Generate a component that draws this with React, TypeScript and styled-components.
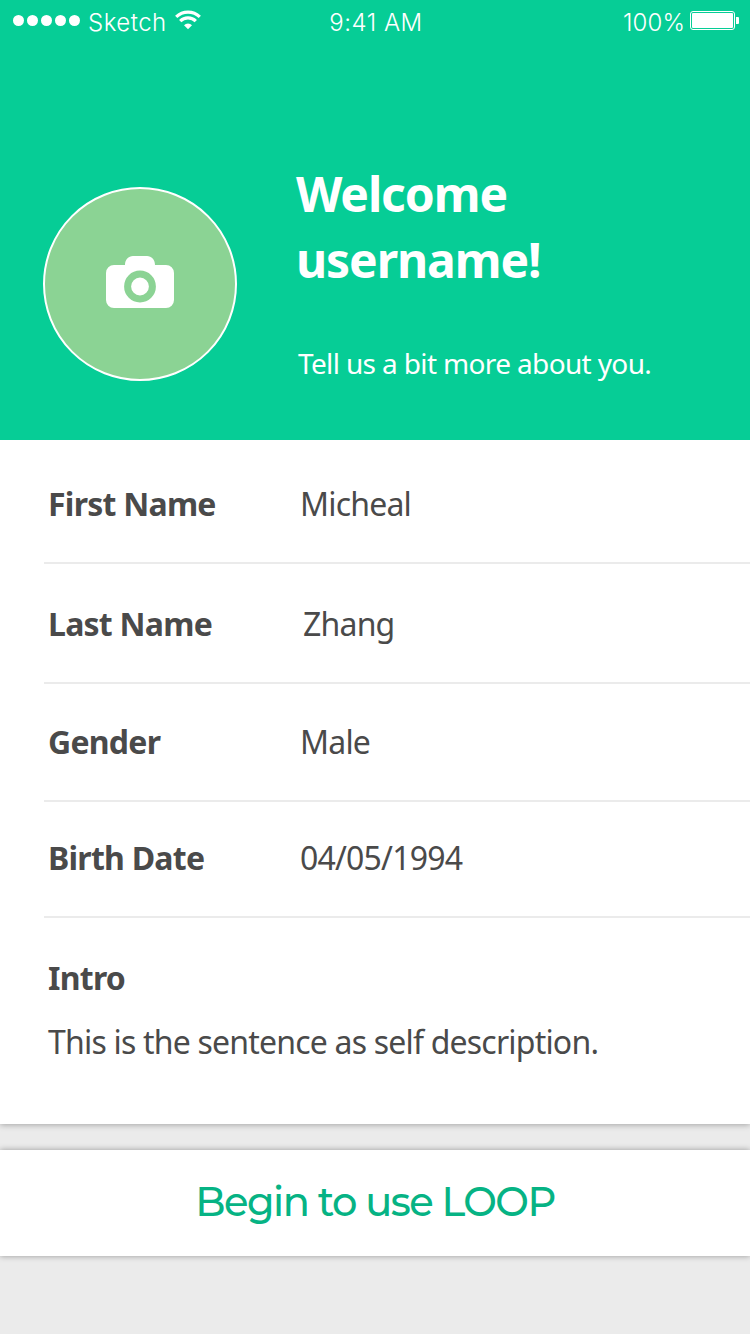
import React from 'react';
import styled, { createGlobalStyle } from 'styled-components';

const GlobalStyle = createGlobalStyle`
  * { box-sizing: border-box; }
  body { margin: 0; background: #ebebeb; }
`;

const Screen = styled.div`
  width: 750px;
  height: 1334px;
  overflow: hidden;
  display: flex;
  flex-direction: column;
  background: #ebebeb;
  color: #4a4a4a;
  font-family: 'Noto Sans', sans-serif;
`;

const Header = styled.header`
  position: relative;
  z-index: 1;
  height: 440px;
  flex: none;
  background: #06cd96;
  color: #fff;
`;

const StatusBar = styled.div`
  height: 40px;
  display: grid;
  grid-template-columns: 1fr auto 1fr;
  padding: 0 11px 0 13px;
  font-family: Inter, sans-serif;
  font-weight: 300;
  font-size: 24px;
  line-height: 46px;
`;

const StatusGroup = styled.div<{ $end?: boolean }>`
  display: flex;
  height: 40px;
  justify-content: ${({ $end }) => ($end ? 'flex-end' : 'flex-start')};
  svg { display: block; flex: none; }
`;

const StatusText = styled.span<{ $spacing: number }>`
  letter-spacing: ${({ $spacing }) => $spacing}px;
  white-space: nowrap;
`;

const SignalIcon = styled.svg`
  margin: 14px 8px 0 0;
`;

const WifiIcon = styled.svg`
  margin: 10px 0 0 8px;
`;

const BatteryIcon = styled.svg`
  margin: 11px 0 0 5px;
`;

const Hero = styled.div`
  display: flex;
  padding: 120px 0 0 43px;
`;

const Avatar = styled.button`
  width: 194px;
  height: 194px;
  flex: none;
  margin: 27px 59px 0 0;
  padding: 2px 0 0;
  border: 2px solid #fff;
  border-radius: 50%;
  background: #8bd394;
  display: flex;
  align-items: center;
  justify-content: center;
  svg { display: block; margin-top: -6px; }
`;

const Title = styled.h1`
  margin: 1px 0 0;
  font-size: 48px;
  line-height: 66px;
  font-weight: 700;
  letter-spacing: -1.1px;
`;

const Subtitle = styled.p`
  margin: 51px 0 0 2px;
  font-size: 28px;
  line-height: 38px;
  letter-spacing: -0.64px;
  white-space: nowrap;
`;

const Card = styled.section`
  height: 684px;
  flex: none;
  padding-left: 44px;
  background: #fff;
  box-shadow: 0 1px 6px rgba(0, 0, 0, 0.3);
`;

const Row = styled.div<{ $height: number; $top: number }>`
  height: ${({ $height }) => $height}px;
  padding: ${({ $top }) => $top}px 0 0 4px;
  border-bottom: 2px solid #ebebeb;
  display: grid;
  grid-template-columns: 252px 1fr;
`;

const Label = styled.div`
  font-size: 32px;
  line-height: 43px;
  font-weight: 700;
  letter-spacing: -0.75px;
  white-space: nowrap;
`;

const Value = styled.div<{ $indent?: number }>`
  padding-left: ${({ $indent = 0 }) => $indent}px;
  font-size: 32px;
  line-height: 43px;
  letter-spacing: -0.8px;
  white-space: nowrap;
`;

const Intro = styled.div`
  padding: 38px 0 0 4px;
  display: grid;
  gap: 21px;
`;

const BeginButton = styled.button`
  width: 750px;
  height: 106px;
  flex: none;
  margin: 26px 0 0;
  padding: 0 0 2px;
  border: 0;
  background: #fff;
  box-shadow: 0 0 6px rgba(0, 0, 0, 0.36);
  color: #06b384;
  font-family: Montserrat, Inter, sans-serif;
  font-weight: 500;
  font-size: 40px;
  line-height: 104px;
  letter-spacing: -1.5px;
`;

const fields = [
  { label: 'First Name', value: 'Micheal', height: 124, top: 42, indent: 0 },
  { label: 'Last Name', value: 'Zhang', height: 120, top: 38, indent: 3 },
  { label: 'Gender', value: 'Male', height: 118, top: 36, indent: 0 },
  { label: 'Birth Date', value: '04/05/1994', height: 116, top: 34, indent: 0 },
];

export default function App() {
  return (
    <Screen>
      <GlobalStyle />
      <Header>
        <StatusBar>
          <StatusGroup>
            <SignalIcon width="67" height="13" viewBox="0 0 67 13" fill="#fff">
              {[5.5, 19.5, 33.5, 47.5, 61.5].map((x) => (
                <circle key={x} cx={x} cy="6.5" r="5.5" />
              ))}
            </SignalIcon>
            <StatusText $spacing={0.5}>Sketch</StatusText>
            <WifiIcon width="26" height="20" viewBox="0 0 26 20" fill="none" stroke="#fff" strokeWidth="3.2">
              <path d="M1.2 6.8 A17 17 0 0 1 24.8 6.8" />
              <path d="M5.2 11.1 A11 11 0 0 1 20.8 11.1" />
              <path d="M13 19.2 L9 15.2 A5.6 5.6 0 0 1 17 15.2 Z" fill="#fff" stroke="none" />
            </WifiIcon>
          </StatusGroup>
          <StatusText $spacing={0.5}>9:41 AM</StatusText>
          <StatusGroup $end>
            <StatusText $spacing={0.1}>100%</StatusText>
            <BatteryIcon width="49" height="19" viewBox="0 0 49 19">
              <rect x="0.5" y="0.5" width="44" height="18" rx="2.5" fill="none" stroke="#fff" />
              <rect x="2" y="2" width="41" height="15" rx="1" fill="#fff" />
              <path d="M46 6 H48 Q49 6 49 7 V12 Q49 13 48 13 H46 Z" fill="#fff" />
            </BatteryIcon>
          </StatusGroup>
        </StatusBar>
        <Hero>
          <Avatar aria-label="Add photo">
            <svg width="68" height="52" viewBox="0 0 68 52">
              <path
                fill="#fff"
                d="M8 9 H19 C19 3.5 22.5 0 27 0 H41 C45.500 0 49 3.5 49 9 H60 A8 8 0 0 1 68 17 V44 A8 8 0 0 1 60 52 H8 A8 8 0 0 1 0 44 V17 A8 8 0 0 1 8 9 Z"
              />
              <circle cx="34" cy="30.500" r="12.400" fill="#fff" stroke="#8bd394" strokeWidth="7" />
            </svg>
          </Avatar>
          <div>
            <Title>Welcome<br />username!</Title>
            <Subtitle>Tell us a bit more about you.</Subtitle>
          </div>
        </Hero>
      </Header>
      <Card>
        {fields.map((f) => (
          <Row key={f.label} $height={f.height} $top={f.top}>
            <Label>{f.label}</Label>
            <Value $indent={f.indent}>{f.value}</Value>
          </Row>
        ))}
        <Intro>
          <Label>Intro</Label>
          <Value>This is the sentence as self description.</Value>
        </Intro>
      </Card>
      <BeginButton>Begin to use LOOP</BeginButton>
    </Screen>
  );
}
